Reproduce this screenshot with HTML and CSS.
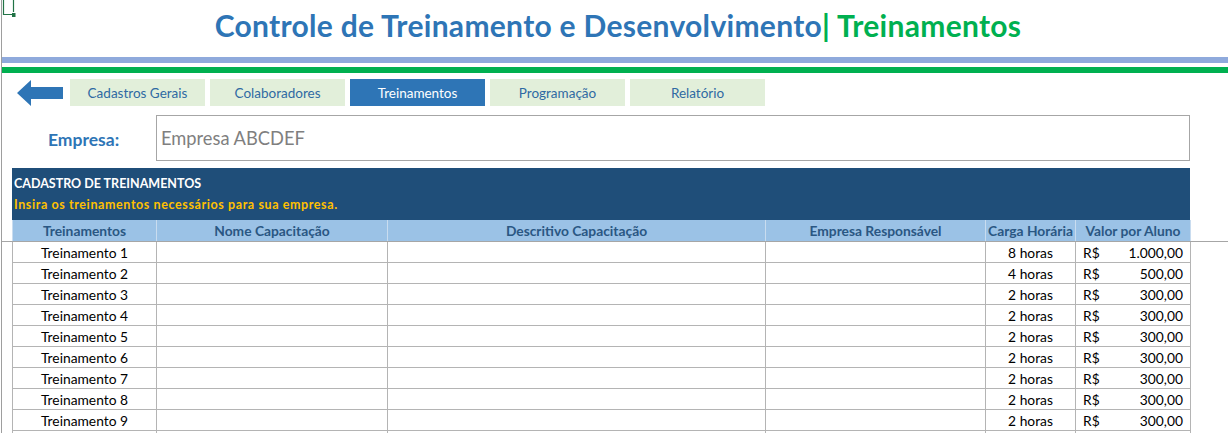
FILE: index.html
```html
<!DOCTYPE html>
<html lang="pt-br">
<head>
    <meta charset="UTF-8">
    <title>Controle de Treinamento e Desenvolvimento | Treinamentos</title>
    <link rel="stylesheet" href="styles.css">
</head>
<body>
<div class="sheet">

    <!-- Marcador da célula selecionada -->
    <svg class="cell-cursor" width="14" height="18" viewBox="0 0 14 18">
        <path d="M1.5 0 V14.5 H10 M11.5 0 V12" fill="none" stroke="#217346" stroke-width="1.2"/>
        <rect x="10" y="13" width="3.5" height="4" fill="#217346"/>
    </svg>

    <div class="header">
        <h1 class="title">Controle de Treinamento e Desenvolvimento<span class="sep">|</span> <span class="title-page">Treinamentos</span></h1>
    </div>
    <div class="stripe stripe-blue"></div>
    <div class="stripe stripe-green"></div>

    <!-- Menu de navegação -->
    <div class="nav">
        <svg class="back" width="46" height="26" viewBox="0 0 46 26">
            <polygon points="0,13 14,0 14,7 46,7 46,19 14,19 14,26" fill="#2e75b6"/>
        </svg>
        <div class="tab">Cadastros Gerais</div>
        <div class="tab">Colaboradores</div>
        <div class="tab active">Treinamentos</div>
        <div class="tab">Programação</div>
        <div class="tab">Relatório</div>
    </div>

    <div class="company">
        <div class="company-label">Empresa:</div>
        <div class="company-box">Empresa ABCDEF</div>
    </div>

    <!-- Tabela de treinamentos -->
    <div class="table-area">
        <div class="banner">
            <div class="banner-title">CADASTRO DE TREINAMENTOS</div>
            <div class="banner-sub">Insira os treinamentos necessários para sua empresa.</div>
        </div>
        <table class="grid">
            <colgroup>
                <col class="c1"><col class="c2"><col class="c3"><col class="c4"><col class="c5"><col class="c6">
            </colgroup>
            <thead>
                <tr>
                    <th>Treinamentos</th>
                    <th>Nome Capacitação</th>
                    <th>Descritivo Capacitação</th>
                    <th>Empresa Responsável</th>
                    <th>Carga Horária</th>
                    <th>Valor por Aluno</th>
                </tr>
            </thead>
            <tbody>
                <tr><td class="center">Treinamento 1</td><td></td><td></td><td></td><td class="center">8 horas</td><td><div class="money"><span>R$</span><span>1.000,00</span></div></td></tr>
                <tr><td class="center">Treinamento 2</td><td></td><td></td><td></td><td class="center">4 horas</td><td><div class="money"><span>R$</span><span>500,00</span></div></td></tr>
                <tr><td class="center">Treinamento 3</td><td></td><td></td><td></td><td class="center">2 horas</td><td><div class="money"><span>R$</span><span>300,00</span></div></td></tr>
                <tr><td class="center">Treinamento 4</td><td></td><td></td><td></td><td class="center">2 horas</td><td><div class="money"><span>R$</span><span>300,00</span></div></td></tr>
                <tr><td class="center">Treinamento 5</td><td></td><td></td><td></td><td class="center">2 horas</td><td><div class="money"><span>R$</span><span>300,00</span></div></td></tr>
                <tr><td class="center">Treinamento 6</td><td></td><td></td><td></td><td class="center">2 horas</td><td><div class="money"><span>R$</span><span>300,00</span></div></td></tr>
                <tr><td class="center">Treinamento 7</td><td></td><td></td><td></td><td class="center">2 horas</td><td><div class="money"><span>R$</span><span>300,00</span></div></td></tr>
                <tr><td class="center">Treinamento 8</td><td></td><td></td><td></td><td class="center">2 horas</td><td><div class="money"><span>R$</span><span>300,00</span></div></td></tr>
                <tr><td class="center">Treinamento 9</td><td></td><td></td><td></td><td class="center">2 horas</td><td><div class="money"><span>R$</span><span>300,00</span></div></td></tr>
                <tr><td class="center">Treinamento 10</td><td></td><td></td><td></td><td class="center">2 horas</td><td><div class="money"><span>R$</span><span>300,00</span></div></td></tr>
            </tbody>
        </table>
    </div>

</div>
</body>
</html>
```

FILE: styles.css
```css
body {
    margin: 0;
    padding: 0;
    font-family: 'Lato', 'Open Sans', sans-serif;
    background-color: #ffffff;
    overflow: hidden;
}

.sheet {
    position: relative;
    height: 433px;
    border-left: 1px solid #9e9e9e;
    margin-left: 1px;
    box-sizing: border-box;
}

.cell-cursor {
    position: absolute;
    left: 0;
    top: 0;
}

.header {
    height: 57px;
    box-sizing: border-box;
    padding-bottom: 7px;
    display: flex;
    align-items: center;
    justify-content: center;
}

.title {
    margin: 0;
    font-size: 30px;
    font-weight: bold;
    letter-spacing: 0.3px;
    color: #2e75b6; /* Azul */
    padding-left: 6px;
}

.title .sep,
.title .title-page {
    color: #00b050; /* Verde */
}

.stripe {
    height: 6px;
}

.stripe-blue {
    background-color: #8faadc;
    margin-bottom: 4px;
}

.stripe-green {
    background-color: #00b050;
}

.nav {
    display: flex;
    align-items: center;
    gap: 5px;
    margin-top: 6px;
    height: 27px;
    padding-left: 15px;
}

.back {
    margin-right: 2px;
}

.tab {
    width: 135px;
    height: 27px;
    display: flex;
    align-items: center;
    justify-content: center;
    background-color: #e2efda;
    color: #2f6aa3;
    font-size: 13.5px;
}

.tab.active {
    background-color: #2e75b6;
    color: #ffffff;
}

.company {
    display: flex;
    align-items: center;
    margin-top: 9px;
    height: 46px;
}

.company-label {
    width: 154px;
    box-sizing: border-box;
    padding-left: 46px;
    font-size: 17.5px;
    font-weight: bold;
    color: #2e75b6;
    padding-top: 3px;
}

.company-box {
    width: 1034px;
    height: 46px;
    box-sizing: border-box;
    border: 1px solid #a6a6a6;
    display: flex;
    align-items: center;
    padding-left: 4px;
    font-size: 18.3px;
    color: #7f7f7f;
}

.table-area {
    margin-top: 7px;
    padding-left: 10px;
    background-image: linear-gradient(#a6a6a6, #a6a6a6);
    background-size: 100% 1px;
    background-position: 0 73px;
    background-repeat: no-repeat;
}

.banner {
    width: 1178px;
    height: 52px;
    box-sizing: border-box;
    background-color: #1f4e79;
    padding: 8px 0 0 2px;
    font-weight: bold;
    font-size: 12.5px;
}

.banner-title {
    color: #ffffff;
    height: 21px;
}

.banner-sub {
    color: #ffc000; /* Amarelo */
    letter-spacing: 0.6px;
}

.grid {
    width: 1178px;
    border-collapse: collapse;
    table-layout: fixed;
    font-size: 13.8px;
}

.c1 { width: 144px; }
.c2 { width: 231px; }
.c3 { width: 378px; }
.c4 { width: 220px; }
.c5 { width: 90px; }
.c6 { width: 115px; }

.grid th {
    height: 21px;
    padding: 0;
    background-color: #9bc2e6;
    color: #2a5783;
    font-weight: bold;
    border-left: 1px solid #c9dcef;
    border-right: 1px solid #c9dcef;
    border-bottom: 1px solid #a6a6a6;
}

.grid td {
    height: 20px;
    padding: 0;
    color: #000000;
    background-color: #ffffff;
    border: 1px solid #b4b4b4;
}

.center {
    text-align: center;
}

.money {
    display: flex;
    justify-content: space-between;
    padding: 0 7px 0 7px;
}
```
